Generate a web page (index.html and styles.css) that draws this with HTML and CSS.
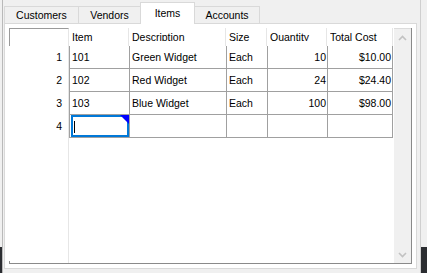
FILE: index.html
```html
<!DOCTYPE html>
<html>
<head>
<meta charset="utf-8">
<link rel="stylesheet" href="styles.css">
</head>
<body>
<div class="screen">
  <div class="edge edge-left"></div>
  <div class="window">
    <div class="tabs">
      <div class="tab tab-first">Customers</div>
      <div class="tab">Vendors</div>
      <div class="tab tab-active">Items</div>
      <div class="tab tab-last">Accounts</div>
    </div>
    <div class="panel">
      <div class="grid">
        <div class="cells">
          <div class="corner"></div>
          <div class="hcell"><span class="htext">Item</span></div>
          <div class="hcell"><span class="htext">Description</span></div>
          <div class="hcell"><span class="htext">Size</span></div>
          <div class="hcell"><span class="htext">Quantity</span></div>
          <div class="hcell hlast"><span class="htext">Total Cost</span></div>

          <div class="rowhead">1</div>
          <div class="cell">101</div>
          <div class="cell">Green Widget</div>
          <div class="cell">Each</div>
          <div class="cell num">10</div>
          <div class="cell num last">$10.00</div>

          <div class="rowhead">2</div>
          <div class="cell">102</div>
          <div class="cell">Red Widget</div>
          <div class="cell">Each</div>
          <div class="cell num">24</div>
          <div class="cell num last">$24.40</div>

          <div class="rowhead">3</div>
          <div class="cell">103</div>
          <div class="cell">Blue Widget</div>
          <div class="cell">Each</div>
          <div class="cell num">100</div>
          <div class="cell num last">$98.00</div>

          <div class="rowhead">4</div>
          <div class="cell editing">
            <div class="editor"><span class="caret"></span><span class="flag"></span></div>
          </div>
          <div class="cell"></div>
          <div class="cell"></div>
          <div class="cell num"></div>
          <div class="cell num last"></div>

          <div class="filler"><span class="tick"></span></div>
        </div>
        <div class="vscroll">
          <div class="arrow">
            <svg width="9" height="6" viewBox="0 0 9 6"><polyline points="1,5 4.5,1.5 8,5" fill="none" stroke="#c2c2c2" stroke-width="1.6"/></svg>
          </div>
          <div class="arrow">
            <svg width="9" height="6" viewBox="0 0 9 6"><polyline points="1,1 4.5,4.5 8,1" fill="none" stroke="#c2c2c2" stroke-width="1.6"/></svg>
          </div>
        </div>
      </div>
    </div>
  </div>
  <div class="edge edge-right"></div>
</div>
</body>
</html>
```

FILE: styles.css
```css
* { box-sizing: border-box; }

html, body {
  margin: 0;
  padding: 0;
  background: #f0f0f0;
}

body {
  font-family: "Liberation Sans", Arial, sans-serif;
  font-size: 10.5px;
  color: #000;
}

.screen {
  display: flex;
  width: 427px;
  height: 273px;
  overflow: hidden;
}

.edge {
  background: linear-gradient(#f0f0f0 0, #f0f0f0 247px, #2b2d31 247px);
}

.edge-left { width: 2px; }
.edge-right { width: 6px; }

.window {
  width: 419px;
  height: 273px;
  background: #f0f0f0;
  border-left: 1px solid #b9b9b9;
  border-right: 1px solid #cfcfcf;
  padding: 2px 0 0 1px;
}

.tabs {
  display: flex;
  align-items: flex-end;
  height: 22px;
}

.tab {
  height: 18px;
  line-height: 17px;
  text-align: center;
  background: #f0f0f0;
  border-top: 1px solid #d9d9d9;
  border-left: 1px solid #d9d9d9;
}

.tab-first { width: 74px; }
.tab:nth-child(2) { width: 62px; }
.tab-active {
  width: 55px;
  height: 22px;
  line-height: 21px;
  padding-bottom: 2px;
  background: #fff;
  border-right: 1px solid #d9d9d9;
  position: relative;
  z-index: 2;
}
.tab-last {
  width: 65px;
  border-left: none;
  border-right: 1px solid #d9d9d9;
}

.panel {
  width: 413px;
  height: 246px;
  margin-top: -1px;
  background: #fff;
  border: 1px solid #d9d9d9;
  padding: 4px 4px 4px 4px;
  position: relative;
  z-index: 1;
}

.grid {
  display: flex;
  width: 403px;
  height: 236px;
  border-right: 1px solid #8a8a8a;
  border-bottom: 1px solid #8a8a8a;
}

.cells {
  display: grid;
  grid-template-columns: 60px 60px 97px 41px 60px 66px;
  grid-template-rows: 18px repeat(4, 23px) 1fr;
  width: 384px;
  margin-right: 1px;
}

.corner {
  border-top: 1px solid #9a9a9a;
  border-left: 1px solid #9a9a9a;
  border-right: 1px solid #e6e6e6;
}

.hcell {
  border-right: 1px solid #e6e6e6;
  padding: 3px 0 0 3px;
  overflow: hidden;
}

.htext {
  display: block;
  line-height: 13px;
  height: 10px;
  overflow: hidden;
  white-space: nowrap;
}

.rowhead {
  border-right: 1px solid #e6e6e6;
  text-align: right;
  padding-right: 6px;
  line-height: 22px;
}

.cell {
  border-left: 1px solid #a0a0a0;
  border-bottom: 1px solid #a0a0a0;
  line-height: 22px;
  padding: 0 1px 0 2px;
  white-space: nowrap;
  overflow: hidden;
}

.num { text-align: right; }
.last { border-right: 1px solid #a0a0a0; }

.editing {
  position: relative;
}

.editor {
  position: absolute;
  left: 1px;
  top: 0;
  right: 0;
  bottom: 0;
  border: 2px solid #0078d7;
}

.caret {
  position: absolute;
  left: 1px;
  top: 4px;
  width: 1px;
  height: 12px;
  background: #000;
}

.flag {
  position: absolute;
  top: -2px;
  right: -2px;
  width: 9px;
  height: 9px;
  background: #0000ff;
  clip-path: polygon(0 0, 100% 0, 100% 100%);
}

.filler {
  grid-column: 1;
  border-right: 1px solid #e6e6e6;
  position: relative;
}

.tick {
  position: absolute;
  left: 0;
  bottom: 0;
  width: 1px;
  height: 2px;
  background: #8a8a8a;
}

.vscroll {
  width: 17px;
  background: #f0f0f0;
  border-top: 1px solid #dcdcdc;
  display: flex;
  flex-direction: column;
  justify-content: space-between;
}

.arrow {
  height: 17px;
  display: flex;
  align-items: center;
  justify-content: center;
}

.arrow svg { display: block; }
```
